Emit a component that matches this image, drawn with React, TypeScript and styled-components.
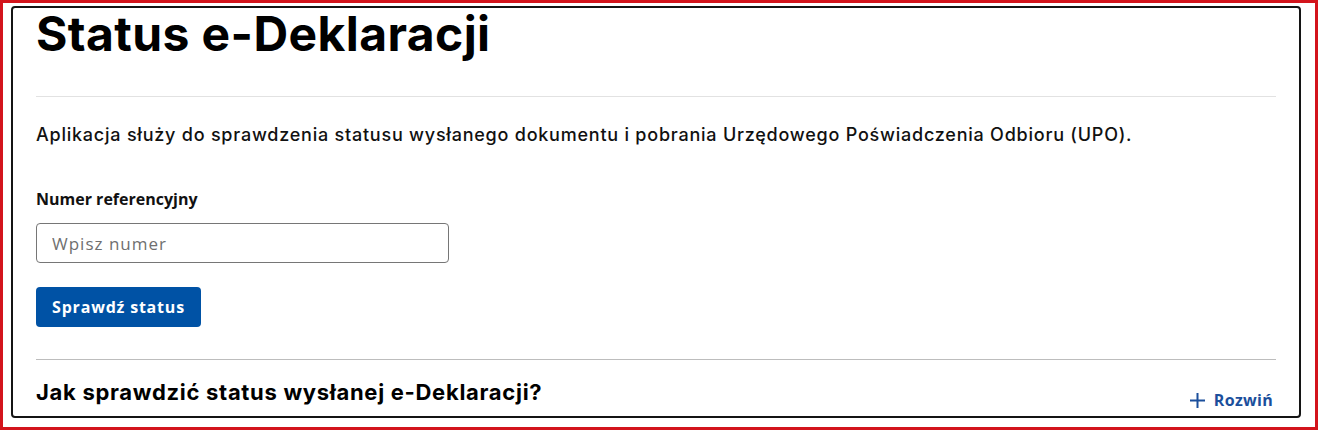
import React from "react";
import styled, { createGlobalStyle } from "styled-components";

const GlobalStyle = createGlobalStyle`
  html, body { margin: 0; padding: 0; background: #ffffff; }
  * { box-sizing: border-box; }
`;

const Frame = styled.div`
  width: 1318px;
  height: 430px;
  border: 3px solid #d3141c;
  padding: 3px 14px 9px 8px;
  background: #ffffff;
`;

const Card = styled.section`
  height: 100%;
  border: 2px solid #141414;
  border-radius: 4px;
  padding: 0 23px;
  display: flex;
  flex-direction: column;
`;

const Title = styled.h1`
  margin: 0;
  font-family: Inter, "Liberation Sans", sans-serif;
  font-weight: 700;
  font-size: 48px;
  line-height: 52px;
  letter-spacing: 0.4px;
  color: #000;
`;

const Rule = styled.hr<{ $tone: string; $top: number }>`
  margin: ${(p) => p.$top}px 0 0;
  border: 0;
  height: 1px;
  background: ${(p) => p.$tone};
`;

const Lead = styled.p`
  margin: 26px 0 0;
  font-family: Inter, "Liberation Sans", sans-serif;
  font-weight: 500;
  font-size: 18px;
  line-height: 24px;
  letter-spacing: 0.77px;
  color: #111;
`;

const Field = styled.div`
  margin-top: 40px;
  display: flex;
  flex-direction: column;
  align-items: flex-start;
  gap: 12px;
`;

const Label = styled.label`
  font-family: "Open Sans", sans-serif;
  font-weight: 700;
  font-size: 16px;
  line-height: 24px;
  color: #111;
`;

const Input = styled.input`
  width: 413px;
  height: 40px;
  border: 1px solid #767676;
  border-radius: 4px;
  padding: 0 15px;
  font-family: "Open Sans", sans-serif;
  font-size: 17px;
  letter-spacing: 1px;
  color: #222;
  &::placeholder { color: #6f6f6f; }
`;

const Button = styled.button`
  margin-top: 24px;
  align-self: flex-start;
  width: 165px;
  height: 40px;
  padding: 0;
  border: 0;
  border-radius: 4px;
  background: #0052a5;
  color: #fff;
  font-family: "Open Sans", sans-serif;
  font-weight: 700;
  font-size: 16px;
  letter-spacing: 0.8px;
`;

const AccordionRow = styled.div`
  margin-top: 18px;
  display: flex;
  justify-content: space-between;
  align-items: flex-start;
`;

const AccordionTitle = styled.h2`
  margin: 0;
  font-family: Inter, "Liberation Sans", sans-serif;
  font-weight: 700;
  font-size: 22px;
  line-height: 28px;
  letter-spacing: 0.7px;
  color: #000;
`;

const Toggle = styled.button`
  margin-top: 10px;
  margin-right: 3px;
  display: flex;
  align-items: center;
  gap: 9px;
  padding: 0;
  border: 0;
  background: none;
  color: #1b4f9c;
  font-family: "Open Sans", sans-serif;
  font-weight: 700;
  font-size: 16px;
  line-height: 24px;
  letter-spacing: 0.3px;
`;

export default function App() {
  return (
    <>
      <GlobalStyle />
      <Frame>
        <Card>
          <Title>Status e-Deklaracji</Title>
          <Rule $tone="#e2e2e2" $top={36} />
          <Lead>
            Aplikacja służy do sprawdzenia statusu wysłanego dokumentu i pobrania Urzędowego
            Poświadczenia Odbioru (UPO).
          </Lead>
          <Field>
            <Label htmlFor="ref">Numer referencyjny</Label>
            <Input id="ref" placeholder="Wpisz numer" />
          </Field>
          <Button>Sprawdź status</Button>
          <Rule $tone="#bdbdbd" $top={32} />
          <AccordionRow>
            <AccordionTitle>Jak sprawdzić status wysłanej e-Deklaracji?</AccordionTitle>
            <Toggle>
              <svg width="15" height="15" viewBox="0 0 15 15" aria-hidden="true">
                <path d="M7.5 0v15M0 7.5h15" stroke="currentColor" strokeWidth="2" />
              </svg>
              Rozwiń
            </Toggle>
          </AccordionRow>
        </Card>
      </Frame>
    </>
  );
}
